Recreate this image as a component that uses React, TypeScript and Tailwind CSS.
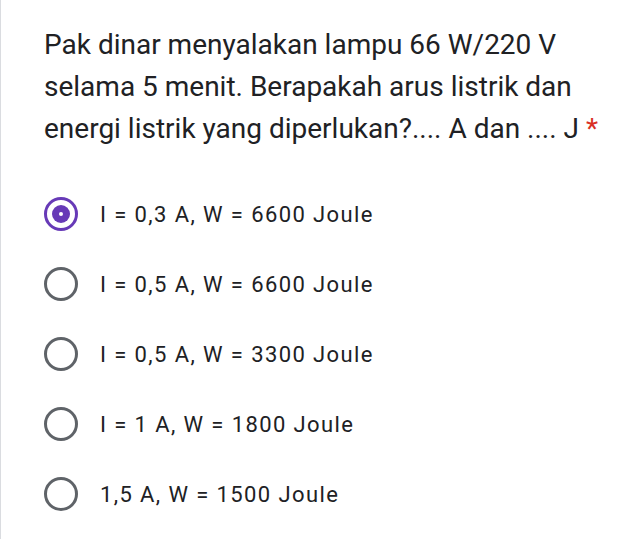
import React from 'react';

const options = [
  'I = 0,3 A, W = 6600 Joule',
  'I = 0,5 A, W = 6600 Joule',
  'I = 0,5 A, W = 3300 Joule',
  'I = 1 A, W = 1800 Joule',
  '1,5 A, W = 1500 Joule',
];

const Radio: React.FC<{ checked?: boolean }> = ({ checked }) => (
  <div
    className={
      checked
        ? 'w-[34px] h-[34px] rounded-full border-[3px] border-[#673ab7] flex items-center justify-center shrink-0'
        : 'w-[34px] h-[34px] rounded-full border-[3px] border-[#5f6368] shrink-0'
    }
  >
    {checked && (
      <div className="w-[18px] h-[18px] rounded-full bg-[#673ab7] flex items-center justify-center">
        <div className="w-[4px] h-[4px] rounded-full bg-white" />
      </div>
    )}
  </div>
);

export default function App() {
  return (
    <div className="w-[632px] h-[539px] bg-white border-l border-[#dadce0] overflow-hidden">
      <div className="pl-[43px] pr-4 pt-[24px]">
        <p className="text-[28px] leading-[42px] text-[#202124] font-['Roboto',sans-serif]">
          Pak dinar menyalakan lampu 66 W/220 V selama 5 menit. Berapakah arus listrik dan energi
          listrik yang diperlukan?.... A dan .... J{' '}
          <span className="text-[#d93025]">*</span>
        </p>
        <div className="mt-[29px] flex flex-col">
          {options.map((o, i) => (
            <div key={o} className="flex items-center h-[70px]">
              <Radio checked={i === 0} />
              <span className="ml-[22px] text-[22px] tracking-[1.4px] text-[#202124] font-['Roboto',sans-serif]">
                {o}
              </span>
            </div>
          ))}
        </div>
      </div>
    </div>
  );
}
